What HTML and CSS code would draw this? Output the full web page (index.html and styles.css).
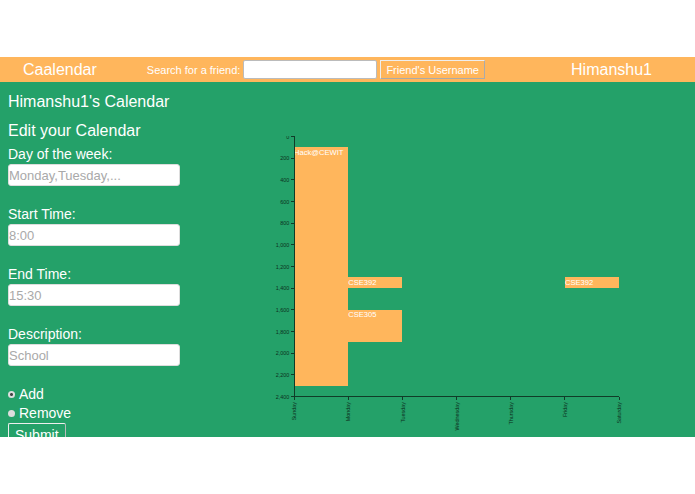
FILE: index.html
```
<!DOCTYPE html>
<html lang="en">
<head>
    <meta charset="UTF-8">
    <meta name="viewport" content="width=device-width, initial-scale=1.0">
    <title>Caalendar</title>
    <link rel="stylesheet" href="styles.css">
</head>
<body>
    <header class="navbar">
        <a class="brand" href="#">Caalendar</a>
        <form class="search">
            <label for="friend">Search for a friend:</label>
            <input type="text" id="friend" name="friend">
            <button type="submit">Friend's Username</button>
        </form>
        <a class="user" href="#">Himanshu1</a>
    </header>

    <main class="content">
        <section class="sidebar">
            <h1>Himanshu1's Calendar</h1>
            <h2>Edit your Calendar</h2>
            <form class="edit-form">
                <div class="field">
                    <label for="day">Day of the week:</label>
                    <input type="text" id="day" name="day" placeholder="Monday,Tuesday,...">
                </div>
                <div class="field">
                    <label for="start">Start Time:</label>
                    <input type="text" id="start" name="start" placeholder="8:00">
                </div>
                <div class="field">
                    <label for="end">End Time:</label>
                    <input type="text" id="end" name="end" placeholder="15:30">
                </div>
                <div class="field">
                    <label for="description">Description:</label>
                    <input type="text" id="description" name="description" placeholder="School">
                </div>
                <div class="option">
                    <input type="radio" id="add" name="action" value="add" checked>
                    <label for="add">Add</label>
                </div>
                <div class="option">
                    <input type="radio" id="remove" name="action" value="remove">
                    <label for="remove">Remove</label>
                </div>
                <button class="submit" type="submit">Submit</button>
            </form>
        </section>

        <section class="chart">
            <svg id="calendar" viewBox="-50 -1 680 560" role="img" aria-label="Weekly calendar"></svg>
        </section>
    </main>

    <script>
        const days = ['Sunday', 'Monday', 'Tuesday', 'Wednesday', 'Thursday', 'Friday', 'Saturday'];
        const events = [
            { day: 0, start: 100, end: 2300, name: 'Hack@CEWIT' },
            { day: 1, start: 1300, end: 1400, name: 'CSE392' },
            { day: 1, start: 1600, end: 1900, name: 'CSE305' },
            { day: 5, start: 1300, end: 1400, name: 'CSE392' }
        ];
        const dayWidth = 100;
        const height = 480;
        const svg = document.getElementById('calendar');

        function y(time) {
            return time * height / 2400;
        }

        function add(tag, attrs, text) {
            const el = document.createElementNS('http://www.w3.org/2000/svg', tag);
            for (const key in attrs) {
                el.setAttribute(key, attrs[key]);
            }
            if (text) {
                el.textContent = text;
            }
            svg.appendChild(el);
        }

        events.forEach(function(e) {
            const x = e.day * dayWidth;
            add('rect', { class: 'event', x: x, y: y(e.start), width: dayWidth, height: y(e.end) - y(e.start) });
            add('text', { class: 'event-name', x: x, y: y(e.start) + 14 }, e.name);
        });

        // Time axis
        add('path', { class: 'axis', d: 'M-6 0H0V' + height + 'H-6' });
        for (let t = 0; t <= 2400; t += 200) {
            add('path', { class: 'axis', d: 'M-6 ' + y(t) + 'H0' });
            add('text', { class: 'tick time', x: -9, y: y(t) + 4 }, t.toLocaleString('en-US'));
        }

        // Day axis
        add('path', { class: 'axis', d: 'M0 ' + height + 'H600' });
        days.forEach(function(day, i) {
            const x = i * dayWidth;
            add('path', { class: 'axis', d: 'M' + x + ' ' + height + 'v6' });
            add('text', { class: 'tick', transform: 'translate(' + (x + 4) + ',' + (height + 10) + ') rotate(-90)' }, day);
        });
    </script>
</body>
</html>
```

FILE: styles.css
```
* {
    margin: 0;
    padding: 0;
    box-sizing: border-box;
}

body {
    font-family: "Liberation Sans", Arial, sans-serif;
    background: white;
    color: white;
    height: 100vh;
    padding: 57px 0;
    display: flex;
    flex-direction: column;
}

input,
button {
    font-family: inherit;
}

.navbar {
    background: #ffb65c;
    display: flex;
    align-items: center;
    height: 25px;
    flex-shrink: 0;
    padding: 0 43px 0 23px;
}

.navbar a {
    color: white;
    font-size: 16px;
    text-decoration: none;
}

.search {
    display: flex;
    align-items: center;
    gap: 3px;
    margin-left: 50px;
    font-size: 11px;
}

.search input {
    width: 134px;
    height: 19px;
    border: 1px solid #bbb;
    border-radius: 2px;
    font-size: 11px;
}

.search button {
    height: 19px;
    padding: 0 5px;
    background: none;
    color: white;
    border: 1px solid #eee;
    border-right-color: #aaa;
    border-bottom-color: #aaa;
    font-size: 11px;
}

.user {
    margin-left: auto;
}

.content {
    background: #24a169;
    flex: 1;
    min-height: 0;
    overflow: hidden;
    display: grid;
    grid-template-columns: 38% 53%;
    column-gap: 3px;
    padding: 10px 0 0;
}

.sidebar {
    padding-left: 8px;
}

h1,
h2 {
    font-size: 16px;
    font-weight: normal;
    line-height: 20px;
}

h1 {
    margin-bottom: 9px;
}

h2 {
    margin-bottom: 3px;
}

.field {
    display: flex;
    flex-direction: column;
    align-items: flex-start;
    margin-bottom: 18px;
    font-size: 14px;
    line-height: 20px;
}

.field input {
    width: 172px;
    height: 22px;
    border: 1px solid #ddd;
    border-radius: 3px;
    font-size: 13px;
}

.field input::placeholder {
    color: #a9a9a9;
}

.edit-form .field:nth-of-type(4) {
    margin-bottom: 19px;
}

.option {
    display: flex;
    align-items: center;
    gap: 4px;
    font-size: 14px;
    line-height: 19px;
}

.option input {
    appearance: none;
    width: 7px;
    height: 7px;
    border-radius: 50%;
    background: #ddd;
}

.option input:checked {
    background: radial-gradient(circle, #444 0 1px, #ddd 2px);
}

.submit {
    height: 24px;
    padding: 0 6px;
    background: none;
    color: white;
    border: 1px solid #eee;
    border-right-color: #bbb;
    border-bottom-color: #aaa;
    border-radius: 2px;
    font-size: 14px;
}

.chart {
    padding-top: 44px;
}

.chart svg {
    display: block;
    width: 100%;
}

.event {
    fill: #ffb65c;
    shape-rendering: crispEdges;
}

.event-name {
    fill: white;
    font-size: 14px;
}

.axis {
    fill: none;
    stroke: #103c28;
    stroke-width: 2px;
    shape-rendering: crispEdges;
}

.tick {
    fill: #0c3020;
    font-size: 10px;
    text-anchor: end;
}
```
